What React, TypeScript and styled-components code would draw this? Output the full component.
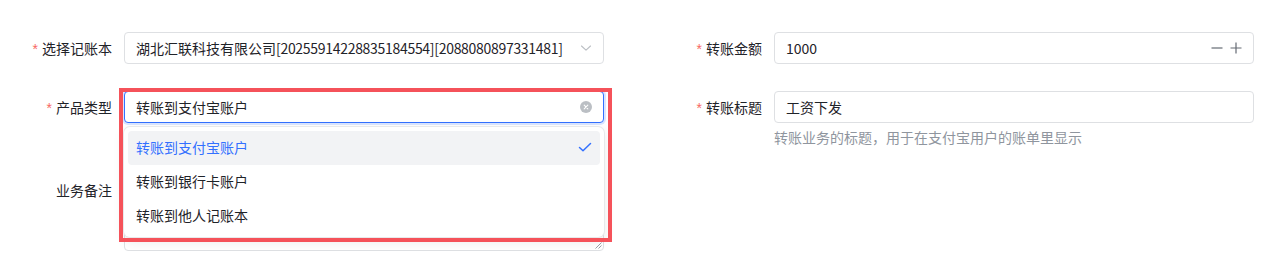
import React from "react";
import styled, { createGlobalStyle } from "styled-components";

const Global = createGlobalStyle`
  html, body { margin: 0; padding: 0; background: #fff; }
  body { font-family: "Noto Sans CJK SC", "Noto Sans", sans-serif; font-size: 14px; color: #1f2329; }
  * { box-sizing: border-box; }
`;

const Page = styled.div`
  padding: 32px 30px 0 12px;
  display: grid;
  grid-template-columns: 592px 592px;
  column-gap: 58px;
  align-items: start;
  width: 1284px;
  height: 263px;
  overflow: hidden;
`;

const Item = styled.div`
  display: flex;
  align-items: flex-start;
  margin-bottom: 26px;
`;

const Label = styled.div`
  width: 100px;
  margin-right: 12px;
  flex: none;
  text-align: right;
  line-height: 32px;
  font-size: 14px;
  color: #1f2329;
  white-space: nowrap;
`;

const Star = styled.span`
  color: #f76964;
  margin-right: 4px;
  font-family: "Liberation Sans", sans-serif;
`;

const Control = styled.div`
  position: relative;
  flex: 1;
  min-width: 0;
`;

const Box = styled.div<{ $focused?: boolean }>`
  height: 32px;
  display: flex;
  align-items: center;
  padding: 0 11px;
  border: 1px solid ${(p) => (p.$focused ? "#3370ff" : "#dee0e3")};
  border-radius: 4px;
  background: #fff;
  box-shadow: ${(p) => (p.$focused ? "0 0 0 2px rgba(51,112,255,0.18)" : "none")};
  font-size: 14px;
  color: #1f2329;
`;

const Value = styled.span`
  flex: 1;
  min-width: 0;
  white-space: nowrap;
  overflow: hidden;
`;

const Code = styled.span`
  letter-spacing: -0.3px;
`;

const Suffix = styled.span`
  display: flex;
  align-items: center;
  gap: 7px;
  flex: none;
  color: #bbbfc4;
`;

const Help = styled.div`
  padding-top: 3px;
  line-height: 22px;
  font-size: 14px;
  color: #8f959e;
`;

const TextArea = styled.div`
  position: relative;
  height: 77px;
  border: 1px solid #dee0e3;
  border-radius: 4px;
  background: #fff;
`;

const Count = styled.span`
  position: absolute;
  right: 14px;
  bottom: 8px;
  font-size: 12px;
  line-height: 16px;
  color: #8f959e;
`;

const Resize = styled.svg`
  position: absolute;
  right: 1px;
  bottom: 1px;
`;

const Dropdown = styled.div`
  position: absolute;
  top: 36px;
  left: 0;
  right: 0;
  z-index: 5;
  padding: 4px;
  background: #fff;
  border-radius: 6px;
  box-shadow: 0 0 0 1px #e8e9eb, 0 4px 12px rgba(31, 35, 41, 0.1);
`;

const Option = styled.div<{ $selected?: boolean }>`
  height: 34px;
  display: flex;
  align-items: center;
  justify-content: space-between;
  padding: 0 8px 2px;
  border-radius: 4px;
  font-size: 14px;
  background: ${(p) => (p.$selected ? "#f2f3f5" : "transparent")};
  color: ${(p) => (p.$selected ? "#3370ff" : "#1f2329")};
`;

const Highlight = styled.div`
  position: absolute;
  left: -5px;
  top: -3px;
  width: 493px;
  height: 154px;
  border: 4px solid #f5525a;
  z-index: 10;
  pointer-events: none;
`;

const Chevron = () => (
  <svg width="12" height="12" viewBox="0 0 12 12" fill="none">
    <path d="M1.5 4 L6 8.2 L10.5 4" stroke="#bbbfc4" strokeWidth="1.1" strokeLinecap="round" strokeLinejoin="round" />
  </svg>
);

const Clear = () => (
  <svg width="12" height="12" viewBox="0 0 12 12">
    <circle cx="6" cy="6" r="6" fill="#bbbfc4" />
    <path d="M4.2 4.2 L7.8 7.8 M7.8 4.2 L4.2 7.8" stroke="#fff" strokeWidth="1.1" strokeLinecap="round" />
  </svg>
);

const Check = () => (
  <svg width="14" height="14" viewBox="0 0 14 14" fill="none">
    <path d="M1.5 7.5 L5 10.8 L12.5 3.5" stroke="#3370ff" strokeWidth="1.5" strokeLinecap="round" strokeLinejoin="round" />
  </svg>
);

const Minus = () => (
  <svg width="12" height="12" viewBox="0 0 12 12">
    <path d="M0.5 6 H11.5" stroke="#646a73" strokeWidth="1.2" />
  </svg>
);

const Plus = () => (
  <svg width="12" height="12" viewBox="0 0 12 12">
    <path d="M0.5 6 H11.5 M6 0.5 V11.5" stroke="#646a73" strokeWidth="1.2" />
  </svg>
);

const Stepper = styled.span`
  display: flex;
  align-items: center;
  gap: 7px;
  flex: none;
`;

export default function App() {
  return (
    <>
      <Global />
      <Page>
        <Item>
          <Label><Star>*</Star>选择记账本</Label>
          <Control>
            <Box>
              <Value>湖北汇联科技有限公司<Code>[20255914228835184554][2088080897331481]</Code></Value>
              <Suffix><Chevron /></Suffix>
            </Box>
          </Control>
        </Item>
        <Item>
          <Label><Star>*</Star>转账金额</Label>
          <Control>
            <Box>
              <Value>1000</Value>
              <Stepper><Minus /><Plus /></Stepper>
            </Box>
          </Control>
        </Item>
        <Item>
          <Label><Star>*</Star>产品类型</Label>
          <Control>
            <Box $focused>
              <Value>转账到支付宝账户</Value>
              <Suffix><Clear /></Suffix>
            </Box>
            <Dropdown>
              <Option $selected>转账到支付宝账户<Check /></Option>
              <Option>转账到银行卡账户</Option>
              <Option>转账到他人记账本</Option>
            </Dropdown>
            <Highlight />
          </Control>
        </Item>
        <Item>
          <Label><Star>*</Star>转账标题</Label>
          <Control>
            <Box>
              <Value>工资下发</Value>
            </Box>
            <Help>转账业务的标题，用于在支付宝用户的账单里显示</Help>
          </Control>
        </Item>
        <Item>
          <Label>业务备注</Label>
          <Control>
            <TextArea>
              <Count>0 / 200</Count>
              <Resize width="7" height="7" viewBox="0 0 7 7">
                <path d="M0.5 6.5 L6.5 0.5 M3.5 6.5 L6.5 3.5" stroke="#8f959e" strokeWidth="0.9" />
              </Resize>
            </TextArea>
          </Control>
        </Item>
      </Page>
    </>
  );
}
